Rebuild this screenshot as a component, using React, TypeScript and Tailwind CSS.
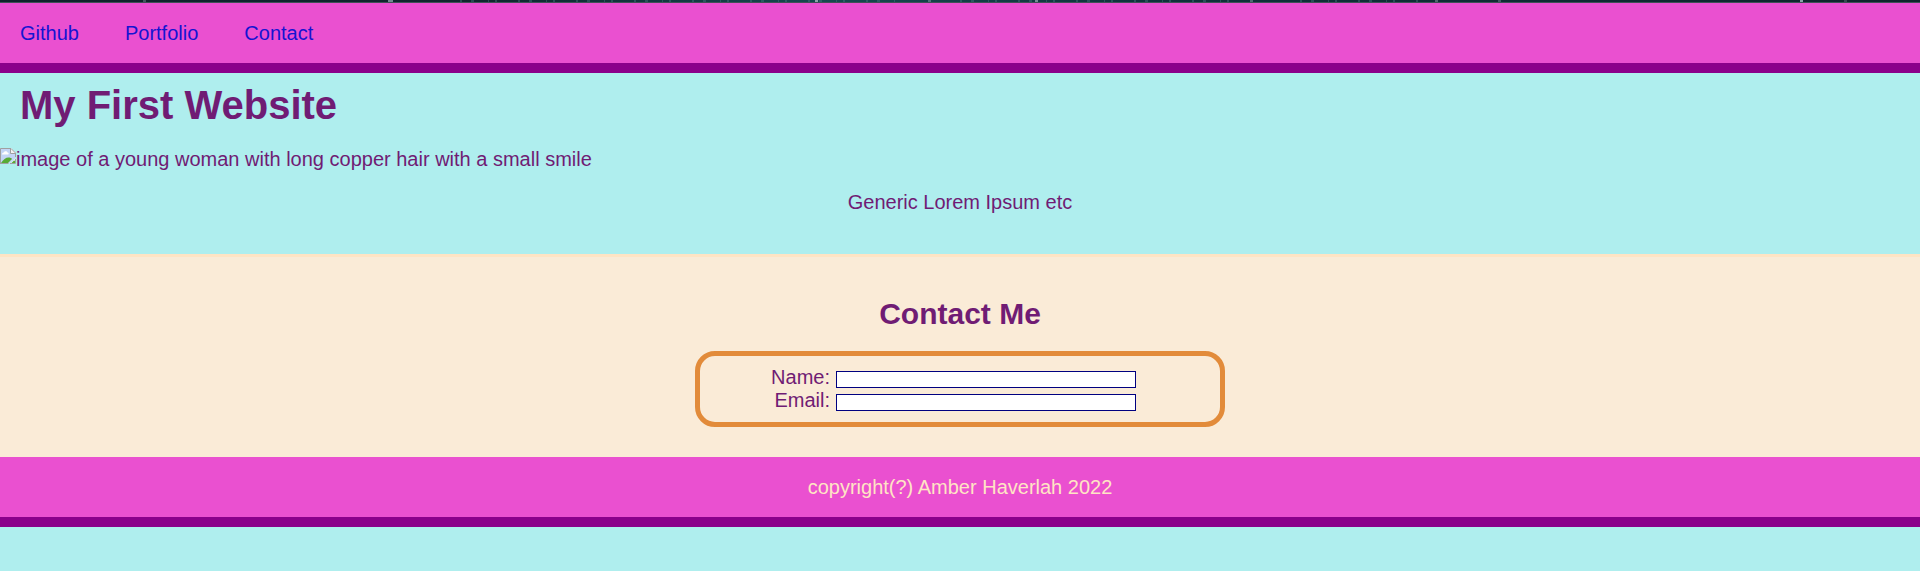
const links = [
  { label: "Github", href: "#github" },
  { label: "Portfolio", href: "#portfolio" },
  { label: "Contact", href: "#contact" },
];

const fields = [
  { id: "name", label: "Name:", type: "text" },
  { id: "email", label: "Email:", type: "email" },
];

function StarStrip() {
  return (
    <svg className="block h-[3px] w-full" viewBox="0 0 1920 3" preserveAspectRatio="none" aria-hidden="true">
      <defs>
        <linearGradient id="sky">
          <stop offset="0" stopColor="#10222b" />
          <stop offset="0.25" stopColor="#0f262e" />
          <stop offset="0.43" stopColor="#154850" />
          <stop offset="0.6" stopColor="#10313b" />
          <stop offset="1" stopColor="#10242b" />
        </linearGradient>
      </defs>
      <rect width="1920" height="3" fill="url(#sky)" />
      <path
        d="M460 1H900M960 1H1240M1300 1H1420"
        stroke="#4d7f88"
        strokeWidth="2"
        strokeDasharray="2 9 3 14 1 6 2 21"
        opacity=".4"
      />
      <g fill="#8ba3aa">
        <rect x="143" width="3" height="2" opacity=".4" />
        <rect x="388" width="5" height="2" opacity=".8" />
        <rect x="815" width="3" height="2" />
        <rect x="928" width="3" height="2" opacity=".5" />
        <rect x="1035" width="3" height="2" opacity=".8" />
        <rect x="1250" width="3" height="2" opacity=".5" />
        <rect x="1435" width="3" height="2" opacity=".5" />
        <rect x="1498" width="3" height="2" opacity=".4" />
        <rect x="1800" width="3" height="2" />
        <rect x="1844" width="3" height="2" opacity=".3" />
      </g>
      <rect y="2" width="1920" height="1" fill="#3f5158" />
    </svg>
  );
}

function BrokenImage({ alt }: { alt: string }) {
  return (
    <div className="flex items-start">
      <svg className="h-4 w-4 shrink-0" viewBox="0 0 16 16" aria-hidden="true">
        <path d="M0 0H11L16 5V9L9 16H0Z" fill="#c3d5f6" />
        <path d="M2 6.500C2 5 3 4.500 4 4.500 4 3 7 2.500 7.500 4.500 9 4.500 9 6.500 8 6.500Z" fill="#fff" />
        <path d="M1 15C3 11.500 6 9.500 8.500 9.500 10 9.500 11.500 10 12 11L8 15Z" fill="#57ab35" />
        <path d="M11 0 16 5H11Z" fill="#f4f4f4" />
        <path d="M.5 16V.5H11L15.500 5V9M10.500 .5V5.500H15.500M0 15.500H8.500" fill="none" stroke="#a0a0a0" />
        <path d="M10 15.500 15.500 10V15.500Z" fill="#e7ecf8" />
        <path d="M11.500 15 14 12.500 15 13V15Z" fill="#57ab35" />
        <path d="M10 15.500H15.500V11" fill="none" stroke="#a0a0a0" />
      </svg>
      <span>{alt}</span>
    </div>
  );
}

export default function App() {
  return (
    <div className="min-h-screen bg-[#afeeee] font-['Liberation_Sans',Arial,sans-serif] text-[20px] leading-[23px] text-[#701c74]">
      <StarStrip />
      <header className="border-b-10 border-[#8b008b] bg-[#ea50d0]">
        <nav className="flex gap-[46px] px-5 pt-[19px] pb-[18px] text-[#1414d2]">
          {links.map((link) => (
            <a key={link.label} href={link.href}>
              {link.label}
            </a>
          ))}
        </nav>
      </header>

      <main>
        <section className="pt-[10px] pb-10">
          <h1 className="mb-5 px-5 text-[40px] leading-[45px] font-bold">My First Website</h1>
          <BrokenImage alt="image of a young woman with long copper hair with a small smile" />
          <p className="mt-5 text-center">Generic Lorem Ipsum etc</p>
        </section>

        <section id="contact" className="border-t-3 border-[#ffe4c4] bg-[#faebd7] pt-10 pb-[30px]">
          <h2 className="mb-5 text-center text-[30px] leading-[34px] font-bold">Contact Me</h2>
          <form className="mx-auto max-w-[530px] rounded-[20px] border-5 border-[#e28b3a] p-[10px]">
            {fields.map((field) => (
              <div key={field.id} className="flex items-end gap-[6px]">
                <label htmlFor={field.id} className="w-[120px] text-right">
                  {field.label}
                </label>
                <input
                  id={field.id}
                  name={field.id}
                  type={field.type}
                  className="mb-px h-[17px] w-[300px] border border-[#000080] bg-white px-1 text-[13px]"
                />
              </div>
            ))}
          </form>
        </section>
      </main>

      <footer className="border-b-10 border-[#8b008b] bg-[#ea50d0] pt-[19px] pb-[18px] text-center text-[#ffe4c4]">
        <p>copyright(?) Amber Haverlah 2022</p>
      </footer>
    </div>
  );
}
